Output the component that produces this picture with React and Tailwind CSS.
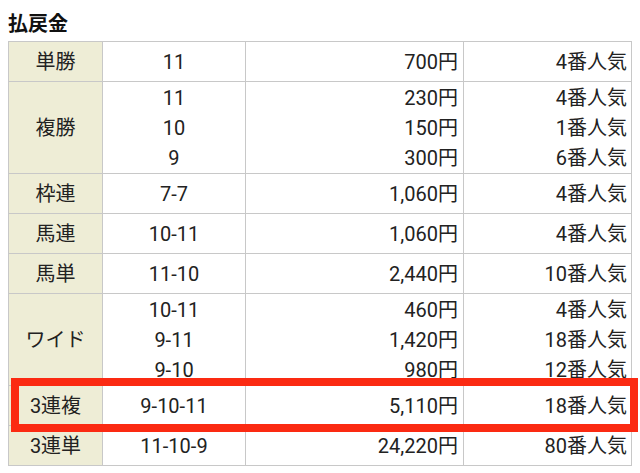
import React from "react";

const rows = [
  { label: "単勝", nums: ["11"], pay: ["700円"], pop: ["4番人気"] },
  { label: "複勝", nums: ["11", "10", "9"], pay: ["230円", "150円", "300円"], pop: ["4番人気", "1番人気", "6番人気"] },
  { label: "枠連", nums: ["7-7"], pay: ["1,060円"], pop: ["4番人気"] },
  { label: "馬連", nums: ["10-11"], pay: ["1,060円"], pop: ["4番人気"] },
  { label: "馬単", nums: ["11-10"], pay: ["2,440円"], pop: ["10番人気"] },
  { label: "ワイド", nums: ["10-11", "9-11", "9-10"], pay: ["460円", "1,420円", "980円"], pop: ["4番人気", "18番人気", "12番人気"] },
  { label: "3連複", nums: ["9-10-11"], pay: ["5,110円"], pop: ["18番人気"] },
  { label: "3連単", nums: ["11-10-9"], pay: ["24,220円"], pop: ["80番人気"] },
];

function Lines({ items, align }) {
  return (
    <div className={"flex flex-col " + align}>
      {items.map((t, i) => (
        <div key={i} className="leading-[30px] h-[30px]">{t}</div>
      ))}
    </div>
  );
}

export default function App() {
  return (
    <div
      className="relative w-[640px] h-[473px] bg-white text-[#222] text-[20px]"
      style={{ fontFamily: 'Roboto, "Noto Sans CJK JP", sans-serif' }}
    >
      <div className="h-[41px] pt-[10px] pl-[8px] font-bold leading-[28px] text-[20px] text-[#111]">払戻金</div>
      <div className="ml-[8px] w-[624px] border-l border-t border-[#c8c8c8]">
        {rows.map((r, i) => {
          const multi = r.nums.length > 1;
          const h = multi ? "h-[92px]" : "h-[40px]";
          return (
            <div key={i} className={"grid grid-cols-[94px_143px_218px_168px] " + h}>
              <div className="bg-[#eeedd6] border-r border-b border-[#c8c8c8] flex items-center justify-center leading-[30px]">
                {r.label}
              </div>
              <div className="border-r border-b border-[#c8c8c8] flex items-center justify-center">
                <Lines items={r.nums} align="items-center" />
              </div>
              <div className="border-r border-b border-[#c8c8c8] flex items-center justify-end pr-[5px]">
                <Lines items={r.pay} align="items-end" />
              </div>
              <div className="border-r border-b border-[#c8c8c8] flex items-center justify-end pr-[4px]">
                <Lines items={r.pop} align="items-end" />
              </div>
            </div>
          );
        })}
      </div>
      <div className="absolute left-[11px] top-[378px] w-[627px] h-[54px] border-[8px] border-[#fb2a12]" />
    </div>
  );
}
